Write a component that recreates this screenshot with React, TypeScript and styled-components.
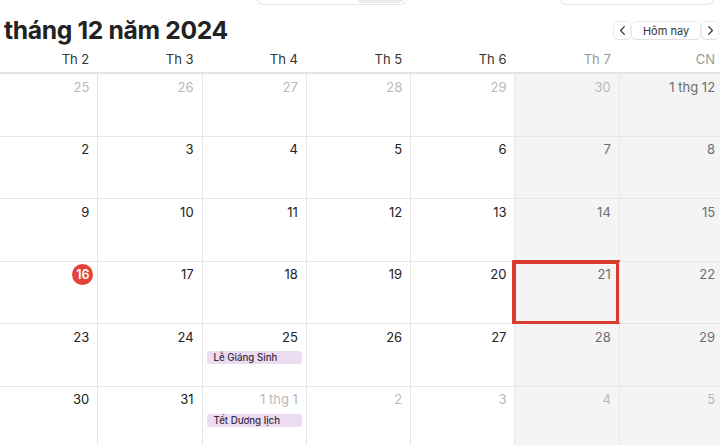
import React from "react";
import styled, { createGlobalStyle } from "styled-components";

const GlobalStyle = createGlobalStyle`
  html, body {
    margin: 0;
    padding: 0;
    background: #fff;
    overflow: hidden;
  }
  body {
    font-family: Inter, "Noto Sans", "Liberation Sans", sans-serif;
    color: #222;
  }
`;

type Cell = {
  label: string;
  muted?: boolean;
  today?: boolean;
  selected?: boolean;
  event?: string;
};

const rows: Cell[][] = [
  [
    { label: "25", muted: true },
    { label: "26", muted: true },
    { label: "27", muted: true },
    { label: "28", muted: true },
    { label: "29", muted: true },
    { label: "30", muted: true },
    { label: "1 thg 12" },
  ],
  [{ label: "2" }, { label: "3" }, { label: "4" }, { label: "5" }, { label: "6" }, { label: "7" }, { label: "8" }],
  [{ label: "9" }, { label: "10" }, { label: "11" }, { label: "12" }, { label: "13" }, { label: "14" }, { label: "15" }],
  [
    { label: "16", today: true },
    { label: "17" },
    { label: "18" },
    { label: "19" },
    { label: "20" },
    { label: "21", selected: true },
    { label: "22" },
  ],
  [
    { label: "23" },
    { label: "24" },
    { label: "25", event: "Lễ Giáng Sinh" },
    { label: "26" },
    { label: "27" },
    { label: "28" },
    { label: "29" },
  ],
  [
    { label: "30" },
    { label: "31" },
    { label: "1 thg 1", muted: true, event: "Tết Dương lịch" },
    { label: "2", muted: true },
    { label: "3", muted: true },
    { label: "4", muted: true },
    { label: "5", muted: true },
  ],
];

const dayNames = ["Th 2", "Th 3", "Th 4", "Th 5", "Th 6", "Th 7", "CN"];

function App() {
  return (
    <>
      <GlobalStyle />
      <Page>
        <TopStrip>
          <Segmented>
            <Segment />
            <Segment $active />
          </Segmented>
          <Search />
        </TopStrip>
        <TitleBar>
          <Title>tháng 12 năm 2024</Title>
          <Nav>
            <NavButton>
              <Chevron viewBox="0 0 8 12">
                <path d="M6 1.5 L1.8 6 L6 10.5" />
              </Chevron>
            </NavButton>
            <TodayButton>Hôm nay</TodayButton>
            <NavButton>
              <Chevron viewBox="0 0 8 12">
                <path d="M2 1.5 L6.2 6 L2 10.5" />
              </Chevron>
            </NavButton>
          </Nav>
        </TitleBar>
        <Grid>
          <HeaderRow>
            {dayNames.map((d, i) => (
              <DayName key={d} $weekend={i >= 5}>
                {d}
              </DayName>
            ))}
          </HeaderRow>
          {rows.map((row, r) => (
            <WeekRow key={r}>
              {row.map((c, i) => (
                <DayCell key={i} $weekend={i >= 5} $selected={c.selected}>
                  <DateLine>
                    {c.today ? (
                      <TodayBadge>{c.label}</TodayBadge>
                    ) : (
                      <DateNum $muted={c.muted} $weekend={i >= 5}>
                        {c.label}
                      </DateNum>
                    )}
                  </DateLine>
                  {c.event && <EventPill>{c.event}</EventPill>}
                </DayCell>
              ))}
            </WeekRow>
          ))}
        </Grid>
      </Page>
    </>
  );
}

const Page = styled.div`
  width: 720px;
  height: 445px;
  overflow: hidden;
  position: relative;
`;

const TopStrip = styled.div`
  height: 5px;
  display: flex;
  align-items: flex-end;
  overflow: hidden;
`;

const Segmented = styled.div`
  margin-left: 257px;
  width: 150px;
  height: 20px;
  display: flex;
  justify-content: flex-end;
  padding: 0 2px 1px 0;
  box-sizing: border-box;
  border: 1px solid #e6e6e6;
  border-top: none;
  border-radius: 0 0 6px 6px;
`;

const Segment = styled.div<{ $active?: boolean }>`
  width: 47px;
  height: 100%;
  border-radius: 0 0 5px 5px;
  background: ${(p) => (p.$active ? "#ececec" : "transparent")};
`;

const Search = styled.div`
  margin-left: 153px;
  width: 154px;
  height: 20px;
  border: 1px solid #e6e6e6;
  border-top: none;
  border-radius: 0 0 6px 6px;
  box-sizing: border-box;
`;

const TitleBar = styled.div`
  display: flex;
  align-items: center;
  justify-content: space-between;
  padding: 10px 2px 0 4px;
  height: 40px;
  box-sizing: border-box;
`;

const Title = styled.h1`
  margin: 0;
  font-size: 24.7px;
  font-weight: 700;
  letter-spacing: -0.35px;
  color: #222;
  line-height: 30px;
`;

const Nav = styled.div`
  display: flex;
  align-items: center;
  gap: 1px;
  margin-top: 1px;
`;

const NavButton = styled.div`
  width: 16px;
  height: 17px;
  border-radius: 4px;
  background: #fff;
  box-shadow: 0 0 0 0.5px #d6d6d6, 0 1px 1px rgba(0, 0, 0, 0.08);
  display: flex;
  align-items: center;
  justify-content: center;
`;

const Chevron = styled.svg`
  width: 7px;
  height: 11px;
  fill: none;
  stroke: #333;
  stroke-width: 1.4;
  stroke-linecap: round;
  stroke-linejoin: round;
`;

const TodayButton = styled.div`
  width: 68px;
  height: 17px;
  margin: 0 1px;
  border-radius: 4px;
  background: #fff;
  box-shadow: 0 0 0 0.5px #d6d6d6, 0 1px 1px rgba(0, 0, 0, 0.08);
  font-size: 11px;
  color: #333;
  display: flex;
  align-items: center;
  justify-content: center;
`;

const Grid = styled.div`
  width: 730px;
  margin-left: -7px;
`;

const Columns = styled.div`
  display: grid;
  grid-template-columns: repeat(7, 104.3px);
`;

const HeaderRow = styled(Columns)`
  height: 29px;
  border-bottom: 2px solid #e4e4e4;
  box-sizing: border-box;
`;

const DayName = styled.div<{ $weekend?: boolean }>`
  font-size: 13px;
  color: ${(p) => (p.$weekend ? "#9a9a9a" : "#333")};
  text-align: right;
  padding: 6px 8px 0 0;
`;

const WeekRow = styled(Columns)`
  height: 62.5px;
  border-bottom: 1px solid #e6e6e6;
  box-sizing: border-box;
`;

const DayCell = styled.div<{ $weekend?: boolean; $selected?: boolean }>`
  position: relative;
  background: ${(p) => (p.$weekend ? "#f4f4f4" : "#fff")};
  border-left: 1px solid #e6e6e6;
  display: flex;
  flex-direction: column;
  align-items: stretch;
  padding: 3px 4px 0 4px;
  box-sizing: border-box;
  ${(p) =>
    p.$selected &&
    `
    &::after {
      content: "";
      position: absolute;
      left: -3px;
      top: -2px;
      right: -1px;
      bottom: -2px;
      border: 4px solid #d93c2d;
      border-radius: 1px;
      pointer-events: none;
    }
  `}
`;

const DateLine = styled.div`
  display: flex;
  justify-content: flex-end;
  height: 19px;
  align-items: center;
  padding-right: 4px;
`;

const DateNum = styled.span<{ $muted?: boolean; $weekend?: boolean }>`
  font-size: 13px;
  color: ${(p) => (p.$muted ? "#b9b9b9" : p.$weekend ? "#6e6e6e" : "#222")};
`;

const TodayBadge = styled.span`
  width: 21px;
  height: 21px;
  margin-right: -4px;
  border-radius: 50%;
  background: #e5423a;
  color: #fff;
  font-size: 12.5px;
  font-weight: 600;
  display: flex;
  align-items: center;
  justify-content: center;
`;

const EventPill = styled.div`
  margin-top: 5px;
  height: 13px;
  border-radius: 3px;
  background: #ecdcf2;
  color: #3a2d40;
  font-size: 9.7px;
  font-weight: 500;
  line-height: 13px;
  padding-left: 7px;
  white-space: nowrap;
  overflow: hidden;
`;

export default App;
